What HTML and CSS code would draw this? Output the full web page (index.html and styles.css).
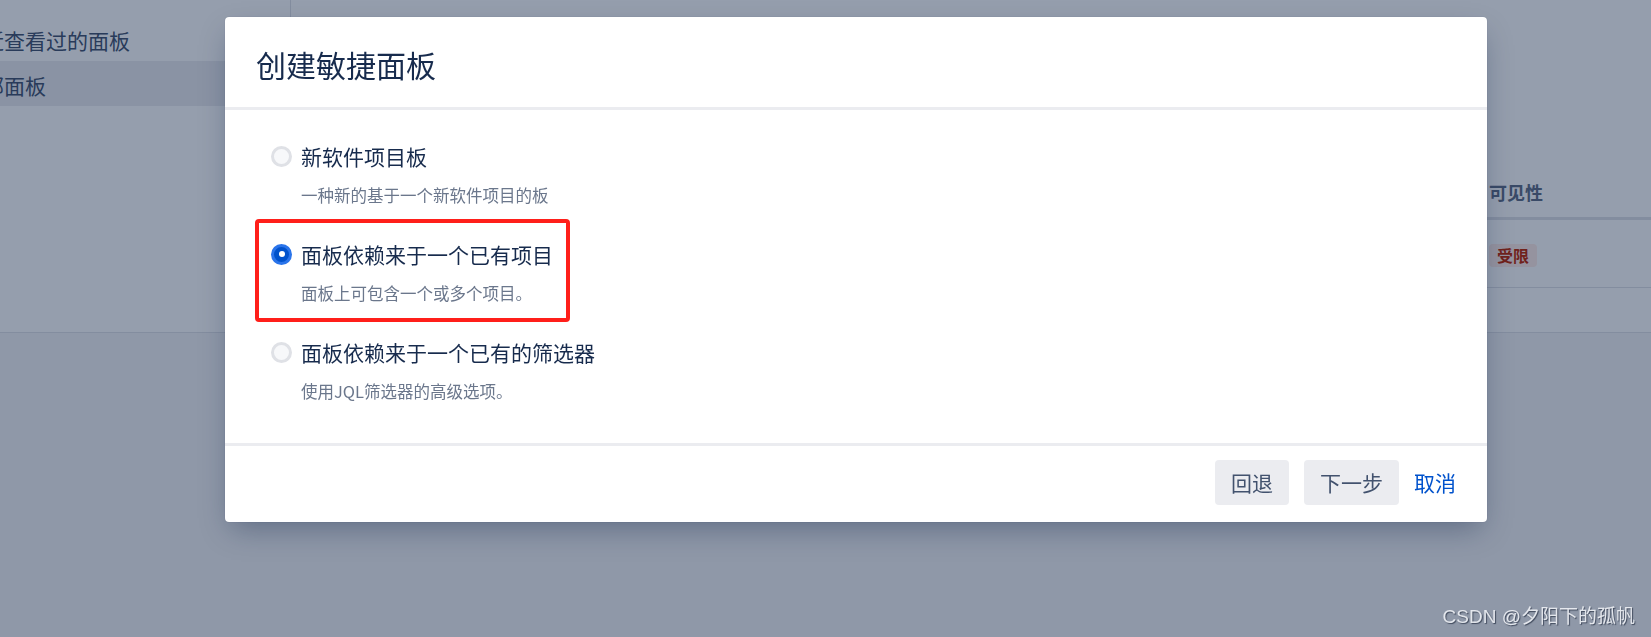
FILE: index.html
```html
<!DOCTYPE html>
<html lang="zh-CN">
<head>
<meta charset="utf-8">
<title>创建敏捷面板</title>
<link rel="stylesheet" href="styles.css">
</head>
<body>
<div class="page">
  <div class="top">
    <aside class="sidebar">
      <ul class="side-list">
        <li class="side-item">最近查看过的面板</li>
        <li class="side-item active">全部面板</li>
      </ul>
    </aside>
    <main class="main">
      <div class="table">
        <div class="th spacer"></div>
        <div class="th">可见性</div>
        <div class="td spacer"></div>
        <div class="td"><span class="badge">受限</span></div>
      </div>
    </main>
  </div>
  <div class="bottom"></div>
</div>

<div class="overlay"></div>

<div class="modal">
  <div class="modal-header">
    <h2 class="modal-title">创建敏捷面板</h2>
  </div>
  <div class="modal-body">
    <div class="option">
      <div class="option-row">
        <span class="radio"></span>
        <span class="option-label">新软件项目板</span>
      </div>
      <div class="option-desc">一种新的基于一个新软件项目的板</div>
    </div>
    <div class="option">
      <div class="option-row">
        <span class="radio checked"></span>
        <span class="option-label">面板依赖来于一个已有项目</span>
      </div>
      <div class="option-desc">面板上可包含一个或多个项目。</div>
    </div>
    <div class="option">
      <div class="option-row">
        <span class="radio"></span>
        <span class="option-label">面板依赖来于一个已有的筛选器</span>
      </div>
      <div class="option-desc">使用JQL筛选器的高级选项。</div>
    </div>
    <div class="highlight-box"></div>
  </div>
  <div class="modal-footer">
    <button class="btn">回退</button>
    <button class="btn">下一步</button>
    <a class="link-btn">取消</a>
  </div>
</div>

<div class="watermark">CSDN @夕阳下的孤帆</div>
</body>
</html>
```
FILE: styles.css
```css
* { box-sizing: border-box; }

html, body {
  margin: 0;
  padding: 0;
  width: 1651px;
  height: 637px;
  overflow: hidden;
  background: #f4f5f7;
  font-family: "Noto Sans CJK SC", "Noto Sans", sans-serif;
  color: #172b4d;
}

.page {
  display: flex;
  flex-direction: column;
  height: 637px;
}

.top {
  display: flex;
  height: 333px;
  background: #ffffff;
  border-bottom: 1px solid #dfe1e6;
}

.sidebar {
  width: 291px;
  border-right: 1px solid #dfe1e6;
  padding-top: 16px;
  overflow: hidden;
}

.side-list {
  list-style: none;
  margin: 0 0 0 -38px;
  padding: 0;
}

.side-item {
  height: 45px;
  padding-top: 4px;
  line-height: 41px;
  font-size: 21px;
  color: #42526e;
  white-space: nowrap;
}

.side-item.active {
  background: #ebecf0;
}

.main {
  flex: 1;
  padding-top: 179px;
}

.table {
  display: grid;
  grid-template-columns: 1198px 1fr;
}

.th {
  font-size: 18px;
  font-weight: 700;
  line-height: 27px;
  color: #5e6c84;
  padding-bottom: 11px;
  border-bottom: 3px solid #dfe1e6;
}

.td {
  padding: 24px 0 19px;
  border-bottom: 1px solid #dfe1e6;
}

.badge {
  display: inline-block;
  background: #ffebe6;
  color: #bf2600;
  font-size: 16px;
  font-weight: 700;
  line-height: 23px;
  padding: 0 8px;
  border-radius: 4px;
  vertical-align: top;
}

.bottom { flex: 1; }

.overlay {
  position: fixed;
  inset: 0;
  background: rgba(9, 30, 66, 0.43);
}

.modal {
  position: absolute;
  left: 225px;
  top: 17px;
  width: 1262px;
  background: #ffffff;
  border-radius: 4px;
  box-shadow: 0 0 1px rgba(9, 30, 66, 0.31), 0 12px 28px -6px rgba(9, 30, 66, 0.35);
}

.modal-header {
  padding: 29px 31px 25px;
  border-bottom: 3px solid #ebecf0;
}

.modal-title {
  margin: 0;
  font-size: 30px;
  font-weight: 400;
  line-height: 36px;
  color: #172b4d;
}

.modal-body {
  position: relative;
  padding: 31px 46px 40px;
}

.option + .option { margin-top: 32px; }

.option-row {
  display: flex;
  align-items: center;
  gap: 9px;
  height: 30px;
}

.radio {
  width: 21px;
  height: 21px;
  border-radius: 50%;
  border: 3px solid #dfe1e6;
  background: #f7f8fa;
  flex: none;
  position: relative;
}

.radio.checked {
  background: #0052cc;
  border-color: #2a74ea;
}

.radio.checked::after {
  content: "";
  position: absolute;
  left: 4.5px;
  top: 4.5px;
  width: 6px;
  height: 6px;
  border-radius: 50%;
  background: #ffffff;
}

.option-label {
  font-size: 21px;
  line-height: 30px;
  color: #172b4d;
}

.option-desc {
  margin-top: 12px;
  margin-left: 30px;
  font-size: 16.5px;
  line-height: 24px;
  color: #6b778c;
}

.highlight-box {
  position: absolute;
  left: 30px;
  top: 109px;
  width: 315px;
  height: 103px;
  border: 4px solid #ff1f1a;
  border-radius: 4px;
}

.modal-footer {
  display: flex;
  justify-content: flex-end;
  align-items: center;
  gap: 15px;
  padding: 14px 31px 17px;
  border-top: 3px solid #ebecf0;
}

.btn {
  font-family: inherit;
  font-size: 21px;
  line-height: 45px;
  height: 45px;
  padding: 0 16px;
  border: none;
  border-radius: 4px;
  background: #ebecf0;
  color: #42526e;
}

.link-btn {
  font-size: 21px;
  line-height: 45px;
  color: #0052cc;
}

.watermark {
  position: absolute;
  right: 16px;
  top: 603px;
  font-family: "Liberation Sans", "Noto Sans CJK SC", sans-serif;
  font-size: 19px;
  line-height: 28px;
  color: rgba(240, 242, 246, 0.9);
  text-shadow: 1px 1px 1px rgba(30, 40, 60, 0.7);
  white-space: nowrap;
}
```
